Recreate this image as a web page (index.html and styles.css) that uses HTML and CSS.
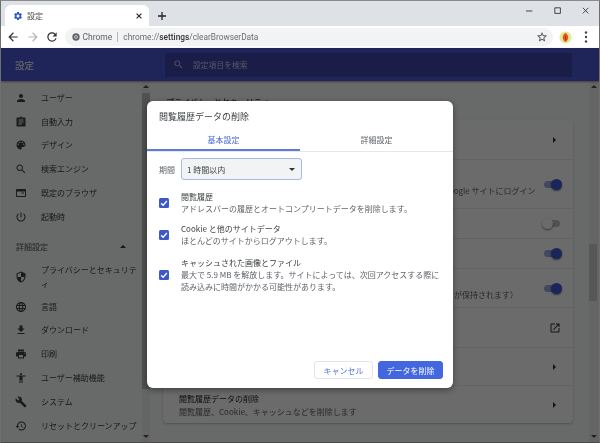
FILE: index.html
```html
<!DOCTYPE html>
<html lang="ja">
<head>
<meta charset="utf-8">
<title>設定</title>
<link rel="stylesheet" href="styles.css">
</head>
<body>
<div class="window">
  <div class="tabstrip">
    <div class="tab">
      <svg class="tab-gear" viewBox="0 0 24 24"><path d="M19.14 12.94c.04-.3.06-.61.06-.94 0-.32-.02-.64-.07-.94l2.03-1.58c.18-.14.23-.41.12-.61l-1.92-3.32c-.12-.22-.37-.29-.59-.22l-2.39.96c-.5-.38-1.03-.7-1.62-.94l-.36-2.54c-.04-.24-.24-.41-.48-.41h-3.84c-.24 0-.43.17-.47.41l-.36 2.54c-.59.24-1.13.57-1.62.94l-2.39-.96c-.22-.08-.47 0-.59.22L2.74 8.87c-.12.21-.08.47.12.61l2.03 1.58c-.05.3-.09.63-.09.94s.02.64.07.94l-2.03 1.58c-.18.14-.23.41-.12.61l1.92 3.32c.12.22.37.29.59.22l2.39-.96c.5.38 1.03.7 1.62.94l.36 2.54c.05.24.24.41.48.41h3.84c.24 0 .44-.17.47-.41l.36-2.54c.59-.24 1.13-.56 1.62-.94l2.39.96c.22.08.47 0 .59-.22l1.92-3.32c.12-.22.07-.47-.12-.61l-2.01-1.58zM12 15.6c-1.98 0-3.6-1.62-3.6-3.6s1.62-3.6 3.6-3.6 3.6 1.62 3.6 3.6-1.62 3.6-3.6 3.6z"/></svg>
      <span class="tab-title">設定</span>
      <svg class="tab-close" viewBox="0 0 10 10"><path d="M2 2l6 6M8 2l-6 6"/></svg>
    </div>
    <svg class="new-tab" viewBox="0 0 10 10"><path d="M5 1v8M1 5h8"/></svg>
    <div class="win-controls">
      <svg class="win-btn" viewBox="0 0 10 10"><path d="M0 5h8"/></svg>
      <svg class="win-btn" viewBox="0 0 10 10"><path d="M1 1h7v7H1z"/></svg>
      <svg class="win-btn" viewBox="0 0 10 10"><path d="M1 1l7 7M8 1L1 8"/></svg>
    </div>
  </div>
  <div class="toolbar">
    <svg class="tool-icon" viewBox="0 0 24 24"><path d="M20 11H7.83l5.59-5.59L12 4l-8 8 8 8 1.41-1.41L7.83 13H20v-2z"/></svg>
    <svg class="tool-icon tool-off" viewBox="0 0 24 24"><path d="M12 4l-1.41 1.41L16.17 11H4v2h12.17l-5.58 5.59L12 20l8-8z"/></svg>
    <svg class="tool-icon" viewBox="0 0 24 24"><path d="M17.65 6.35C16.2 4.9 14.21 4 12 4c-4.42 0-7.99 3.58-7.99 8s3.57 8 7.99 8c3.73 0 6.84-2.55 7.73-6h-2.08c-.82 2.33-3.04 4-5.65 4-3.31 0-6-2.69-6-6s2.69-6 6-6c1.66 0 3.14.69 4.22 1.78L13 11h7V4l-2.35 2.35z"/></svg>
    <div class="omnibox">
      <svg class="chrome-mark" viewBox="0 0 12 12"><circle cx="6" cy="6" r="5.5"/><circle class="chrome-ring" cx="6" cy="6" r="2.2"/></svg>
      <span class="omni-chip">Chrome</span>
      <span class="omni-sep"></span>
      <span class="omni-url">chrome://<b>settings</b>/clearBrowserData</span>
      <svg class="omni-star" viewBox="0 0 24 24"><path d="M22 9.24l-7.19-.62L12 2 9.19 8.63 2 9.24l5.46 4.73L5.82 21 12 17.27 18.18 21l-1.63-7.03L22 9.24zM12 15.4l-3.76 2.27 1-4.28-3.32-2.88 4.38-.38L12 6.1l1.71 4.04 4.38.38-3.32 2.88 1 4.28L12 15.4z"/></svg>
    </div>
    <svg class="avatar" viewBox="0 0 14 14"><circle cx="7" cy="7" r="6.5" fill="#e3ea8f"/><path d="M7 2.2c2 .8 3 3 3 4.8s-1 4-3 4.8C5 11 4 8.800 4 7s1-4 3-4.800z" fill="#e2582c"/><path d="M6.600 5h1v4.500h-1z" fill="#a52a1c"/></svg>
    <svg class="menu-dots" viewBox="0 0 4 14"><circle cx="2" cy="2.500" r="1.200"/><circle cx="2" cy="7" r="1.200"/><circle cx="2" cy="11.500" r="1.200"/></svg>
  </div>

  <div class="page">
    <header class="page-header">
      <div class="header-title">設定</div>
      <div class="search">
        <svg class="search-icon" viewBox="0 0 24 24"><path d="M15.500 14h-.79l-.28-.27C15.410 12.590 16 11.110 16 9.500 16 5.910 13.090 3 9.500 3S3 5.910 3 9.500 5.910 16 9.500 16c1.610 0 3.090-.59 4.230-1.570l.27.28v.79l5 4.990L20.490 19l-4.990-5zm-6 0C7.010 14 5 11.990 5 9.500S7.010 5 9.500 5 14 7.010 14 9.500 11.990 14 9.500 14z"/></svg>
        <span>設定項目を検索</span>
      </div>
    </header>
    <div class="page-body">
      <nav class="sidebar">
        <div class="nav-list">
          <div class="nav-item"><svg class="nav-icon" viewBox="0 0 24 24"><path d="M12 12c2.210 0 4-1.790 4-4s-1.790-4-4-4-4 1.790-4 4 1.790 4 4 4zm0 2c-2.670 0-8 1.340-8 4v2h16v-2c0-2.660-5.330-4-8-4z"/></svg><span>ユーザー</span></div>
          <div class="nav-item"><svg class="nav-icon" viewBox="0 0 24 24"><path d="M19 3h-4.180C14.400 1.840 13.300 1 12 1c-1.300 0-2.400.84-2.820 2H5c-1.100 0-2 .9-2 2v14c0 1.100.9 2 2 2h14c1.100 0 2-.9 2-2V5c0-1.100-.9-2-2-2zm-7 0c.55 0 1 .45 1 1s-.45 1-1 1-1-.45-1-1 .45-1 1-1zm2 14H7v-2h7v2zm3-4H7v-2h10v2zm0-4H7V7h10v2z"/></svg><span>自動入力</span></div>
          <div class="nav-item"><svg class="nav-icon" viewBox="0 0 24 24"><path d="M12 3c-4.970 0-9 4.030-9 9s4.030 9 9 9c.83 0 1.500-.67 1.500-1.500 0-.39-.15-.74-.39-1.010-.23-.26-.38-.61-.38-.99 0-.83.67-1.500 1.500-1.500H16c2.760 0 5-2.240 5-5 0-4.420-4.030-8-9-8zm-5.500 9c-.83 0-1.500-.67-1.500-1.500S5.670 9 6.500 9 8 9.670 8 10.500 7.330 12 6.500 12zm3-4C8.670 8 8 7.330 8 6.500S8.670 5 9.500 5s1.500.67 1.500 1.500S10.330 8 9.500 8zm5 0c-.83 0-1.500-.67-1.500-1.500S13.670 5 14.500 5s1.500.67 1.500 1.500S15.330 8 14.500 8zm3 4c-.83 0-1.500-.67-1.500-1.500S16.670 9 17.500 9s1.500.67 1.500 1.500-.67 1.500-1.500 1.500z"/></svg><span>デザイン</span></div>
          <div class="nav-item"><svg class="nav-icon" viewBox="0 0 24 24"><path d="M15.500 14h-.79l-.28-.27C15.410 12.590 16 11.110 16 9.500 16 5.910 13.090 3 9.500 3S3 5.910 3 9.500 5.910 16 9.500 16c1.610 0 3.090-.59 4.230-1.570l.27.28v.79l5 4.990L20.490 19l-4.990-5zm-6 0C7.010 14 5 11.990 5 9.500S7.010 5 9.500 5 14 7.010 14 9.500 11.990 14 9.500 14z"/></svg><span>検索エンジン</span></div>
          <div class="nav-item"><svg class="nav-icon" viewBox="0 0 24 24"><path d="M20 4H4c-1.100 0-2 .9-2 2v12c0 1.100.9 2 2 2h16c1.100 0 2-.9 2-2V6c0-1.100-.9-2-2-2zm0 14H4V9h16v9zm-7-7h5v2h-5z"/></svg><span>既定のブラウザ</span></div>
          <div class="nav-item"><svg class="nav-icon" viewBox="0 0 24 24"><path d="M13 3h-2v10h2V3zm4.830 2.170l-1.420 1.420C17.990 7.860 19 9.810 19 12c0 3.870-3.130 7-7 7s-7-3.130-7-7c0-2.190 1.010-4.140 2.580-5.420L6.170 5.170C4.230 6.820 3 9.260 3 12c0 4.970 4.030 9 9 9s9-4.030 9-9c0-2.740-1.230-5.180-3.170-6.830z"/></svg><span>起動時</span></div>
          <div class="nav-group"><span>詳細設定</span><i class="caret-up"></i></div>
          <div class="nav-item nav-tall"><svg class="nav-icon" viewBox="0 0 24 24"><path d="M12 1L3 5v6c0 5.550 3.840 10.740 9 12 5.160-1.260 9-6.450 9-12V5l-9-4zm0 10.990h7c-.53 4.120-3.280 7.790-7 8.940V12H5V6.300l7-3.110v8.800z"/></svg><span>プライバシーとセキュリティ</span></div>
          <div class="nav-item"><svg class="nav-icon" viewBox="0 0 24 24"><path d="M11.990 2C6.470 2 2 6.480 2 12s4.470 10 9.990 10C17.520 22 22 17.520 22 12S17.520 2 11.990 2zm6.930 6h-2.950c-.32-1.250-.78-2.450-1.380-3.560 1.840.63 3.370 1.910 4.330 3.560zM12 4.040c.83 1.200 1.480 2.530 1.910 3.960h-3.820c.43-1.430 1.080-2.760 1.910-3.960zM4.260 14C4.100 13.360 4 12.690 4 12s.1-1.360.26-2h3.380c-.08.66-.14 1.320-.14 2 0 .68.06 1.340.14 2H4.260zm.82 2h2.950c.32 1.250.78 2.450 1.380 3.560-1.840-.63-3.370-1.900-4.330-3.560zm2.950-8H5.080c.96-1.660 2.490-2.930 4.330-3.560C8.810 5.550 8.350 6.750 8.030 8zM12 19.960c-.83-1.200-1.480-2.530-1.910-3.960h3.820c-.43 1.430-1.080 2.760-1.910 3.960zM14.340 14H9.660c-.09-.66-.16-1.320-.16-2 0-.68.07-1.350.16-2h4.680c.09.65.16 1.320.16 2 0 .68-.07 1.340-.16 2zm.25 5.560c.6-1.110 1.060-2.310 1.380-3.560h2.950c-.96 1.650-2.490 2.930-4.330 3.560zM16.360 14c.08-.66.14-1.320.14-2 0-.68-.06-1.340-.14-2h3.380c.16.64.26 1.310.26 2s-.1 1.360-.26 2h-3.380z"/></svg><span>言語</span></div>
          <div class="nav-item"><svg class="nav-icon" viewBox="0 0 24 24"><path d="M19 9h-4V3H9v6H5l7 7 7-7zM5 18v2h14v-2H5z"/></svg><span>ダウンロード</span></div>
          <div class="nav-item"><svg class="nav-icon" viewBox="0 0 24 24"><path d="M19 8H5c-1.660 0-3 1.340-3 3v6h4v4h12v-4h4v-6c0-1.660-1.340-3-3-3zm-3 11H8v-5h8v5zm3-7c-.55 0-1-.45-1-1s.45-1 1-1 1 .45 1 1-.45 1-1 1zm-1-9H6v4h12V3z"/></svg><span>印刷</span></div>
          <div class="nav-item"><svg class="nav-icon" viewBox="0 0 24 24"><path d="M12 2c1.100 0 2 .9 2 2s-.9 2-2 2-2-.9-2-2 .9-2 2-2zm9 7h-6v13h-2v-6h-2v6H9V9H3V7h18v2z"/></svg><span>ユーザー補助機能</span></div>
          <div class="nav-item"><svg class="nav-icon" viewBox="0 0 24 24"><path d="M22.700 19l-9.100-9.100c.9-2.300.4-5-1.500-6.900-2-2-5-2.400-7.400-1.300L9 6 6 9 1.600 4.700C.4 7.100.9 10.100 2.900 12.100c1.900 1.900 4.600 2.400 6.900 1.500l9.100 9.100c.4.4 1 .4 1.400 0l2.300-2.300c.5-.4.5-1.100.1-1.400z"/></svg><span>システム</span></div>
          <div class="nav-item"><svg class="nav-icon" viewBox="0 0 24 24"><path d="M13 3c-4.970 0-9 4.030-9 9H1l3.890 3.890.07.14L9 12H6c0-3.870 3.130-7 7-7s7 3.130 7 7-3.130 7-7 7c-1.930 0-3.680-.79-4.940-2.060l-1.420 1.420C8.270 19.990 10.510 21 13 21c4.970 0 9-4.030 9-9s-4.030-9-9-9zm-1 5v5l4.280 2.540.72-1.210-3.500-2.080V8H12z"/></svg><span>リセットとクリーンアップ</span></div>
        </div>
        <div class="scrollbar">
          <i class="sb-up"></i>
          <div class="sb-track sb-track-nav"><div class="sb-thumb sb-thumb-nav"></div></div>
          <i class="sb-down"></i>
        </div>
      </nav>
      <main class="main">
        <div class="main-col">
          <h2 class="section-title">プライバシーとセキュリティ</h2>
          <section class="card">
            <div class="row row-1"><span class="row-text"><b>同期と Google サービス</b></span><i class="arrow"></i></div>
            <div class="row row-2"><span class="row-text"><b>Chrome へのログインを許可</b><small>このスイッチをオフにすると、Chrome にログインしなくてもブラウザで Google サイトにログイン</small></span><i class="toggle on"></i></div>
            <div class="row row-3"><span class="row-text"><b>閲覧トラフィックと一緒に「トラッキング拒否」</b></span><i class="toggle"></i></div>
            <div class="row row-3"><span class="row-text"><b>お支払い方法の保存の確認を許可</b></span><i class="toggle on"></i></div>
            <div class="row row-5"><span class="row-text"><b>ページをプリロードして閲覧と検索をすばやく</b><small>閲覧履歴を使用してページを事前に読み込みます（一部の Google の Cookie が保持されます）</small></span><i class="toggle on"></i></div>
            <div class="row row-6"><span class="row-text"><b>証明書の管理</b></span><svg class="ext" viewBox="0 0 24 24"><path d="M19 19H5V5h7V3H5c-1.110 0-2 .9-2 2v14c0 1.100.89 2 2 2h14c1.100 0 2-.9 2-2v-7h-2v7zM14 3v2h3.590l-9.830 9.830 1.410 1.410L19 6.410V10h2V3h-7z"/></svg></div>
            <div class="row row-7"><span class="row-text"><b>サイトの設定</b><small>ウェブサイトで使用できる情報や、表示できるコンテンツを管理します</small></span><i class="arrow"></i></div>
            <div class="row row-7"><span class="row-text"><b>閲覧履歴データの削除</b><small>閲覧履歴、Cookie、キャッシュなどを削除します</small></span><i class="arrow"></i></div>
          </section>
        </div>
        <div class="scrollbar scrollbar-main">
          <i class="sb-up"></i>
          <div class="sb-track"><div class="sb-thumb"></div></div>
          <i class="sb-down"></i>
        </div>
      </main>
    </div>
    <div class="scrim"></div>
    <div class="dialog">
      <div class="dlg-title">閲覧履歴データの削除</div>
      <div class="dlg-tabs">
        <div class="dlg-tab active">基本設定</div>
        <div class="dlg-tab">詳細設定</div>
      </div>
      <div class="dlg-body">
        <div class="period">
          <span class="period-label">期間</span>
          <div class="select"><span>1 時間以内</span><i class="select-caret"></i></div>
        </div>
        <div class="check-row check-1">
          <span class="checkbox"><svg viewBox="0 0 12 12"><path d="M2.500 6.200l2.400 2.400 4.600-5"/></svg></span>
          <div class="check-text"><div class="check-head">閲覧履歴</div><div class="check-desc">アドレスバーの履歴とオートコンプリートデータを削除します。</div></div>
        </div>
        <div class="check-row check-2">
          <span class="checkbox"><svg viewBox="0 0 12 12"><path d="M2.500 6.200l2.400 2.400 4.600-5"/></svg></span>
          <div class="check-text"><div class="check-head">Cookie と他のサイトデータ</div><div class="check-desc">ほとんどのサイトからログアウトします。</div></div>
        </div>
        <div class="check-row check-3">
          <span class="checkbox"><svg viewBox="0 0 12 12"><path d="M2.500 6.200l2.400 2.400 4.600-5"/></svg></span>
          <div class="check-text"><div class="check-head">キャッシュされた画像とファイル</div><div class="check-desc">最大で 5.9 MB を解放します。サイトによっては、次回アクセスする際に読み込みに時間がかかる可能性があります。</div></div>
        </div>
      </div>
      <div class="dlg-actions">
        <button class="btn btn-cancel">キャンセル</button>
        <button class="btn btn-primary">データを削除</button>
      </div>
    </div>
  </div>
</div>
</body>
</html>
```
FILE: styles.css
```css
* { box-sizing: border-box; }
html, body { margin: 0; padding: 0; }
body { width: 600px; height: 443px; overflow: hidden; font-family: "Noto Sans CJK JP", "Roboto", sans-serif; font-size: 8px; }
.window { width: 600px; height: 443px; display: flex; flex-direction: column; background: #fff; border-top: 1px solid #8b8b8e; border-bottom: 1px solid #4a4a4a; border-left: 1px solid #6e6e6e; border-right: 1px solid #6e6e6e; overflow: hidden; filter: blur(.3px); }

.tabstrip { height: 25px; background: #dee1e6; display: flex; align-items: flex-start; padding: 4px 0 0 4px; flex: none; }
.tab { width: 144px; height: 21px; background: #fff; border-radius: 6px 6px 0 0; display: flex; align-items: center; padding: 0 6px 0 8px; }
.tab-gear { width: 10px; height: 10px; fill: #2b55c9; flex: none; }
.tab-title { margin-left: 4px; font-size: 8px; color: #4a4a4a; flex: 1; }
.tab-close { width: 8px; height: 8px; stroke: #333; stroke-width: 1.600; fill: none; }
.new-tab { width: 10px; height: 10px; margin: 6px 0 0 8px; stroke: #222; stroke-width: 1.300; fill: none; }
.win-controls { margin-left: auto; display: flex; gap: 20px; padding: 2px 9px 0 0; }
.win-btn { width: 8px; height: 8px; stroke: #333; stroke-width: 1.100; fill: none; }

.toolbar { height: 22px; background: #fff; display: flex; align-items: center; padding-left: 5px; flex: none; }
.tool-icon { width: 14px; height: 14px; margin-right: 5.500px; fill: #333; flex: none; }
.tool-off { fill: #b4b6b8; }
.omnibox { width: 488px; height: 18px; border-radius: 9px; background: #f1f3f4; display: flex; align-items: center; padding: 0 5px 0 7px; font-family: "Roboto", sans-serif; font-size: 8.300px; color: #6a6c6f; }
.chrome-mark { width: 8px; height: 8px; fill: #5f6368; flex: none; }
.chrome-ring { fill: #5f6368; stroke: #f1f3f4; stroke-width: 1; }
.omni-chip { margin-left: 3px; color: #5f6368; font-size: 8.500px; }
.omni-sep { width: 1px; height: 10px; background: #b4b6b8; margin: 0 5px 0 5px; }
.omni-url b { font-weight: 500; color: #333; }
.omni-star { margin-left: auto; width: 12px; height: 12px; fill: #444; }
.avatar { width: 13px; height: 13px; margin-left: 6px; flex: none; }
.menu-dots { width: 4px; height: 14px; margin-left: 12px; fill: #444; flex: none; }

.page { position: relative; flex: 1; min-height: 0; display: flex; flex-direction: column; background: #f8f9fa; }
.page-header { height: 33px; flex: none; background: #4a58d2; display: flex; align-items: center; box-shadow: 0 1px 2px rgba(0,0,0,.4); position: relative; z-index: 1; }
.header-title { width: 164px; padding-left: 14px; font-size: 9.500px; color: #fff; }
.search { width: 407px; height: 24px; background: #3c46ab; display: flex; align-items: center; padding-left: 8px; color: #c8ccee; font-size: 7.800px; }
.search-icon { width: 11px; height: 11px; margin-right: 9px; fill: #c8ccee; }

.page-body { flex: 1; min-height: 0; display: flex; }
.sidebar { width: 149px; flex: none; display: flex; }
.nav-list { flex: 1; min-width: 0; padding-top: 5px; }
.nav-item { height: 23.800px; display: flex; align-items: center; font-size: 8px; color: #3c4043; line-height: 14px; }
.nav-tall { height: 36px; }
.nav-tall span { width: 96px; }
.nav-item span { display: block; }
.nav-icon { width: 12px; height: 12px; margin: 0 14px 0 14px; fill: #3c4043; flex: none; }
.nav-group { height: 24px; margin-top: 6px; display: flex; align-items: center; justify-content: space-between; padding: 0 16px 0 15px; font-size: 8px; color: #555; }
.caret-up { width: 0; height: 0; border: 3px solid transparent; border-top: 0; border-bottom: 3px solid #333; }

.scrollbar { width: 8px; flex: none; display: flex; flex-direction: column; align-items: center; background: #f1f1f1; }
.scrollbar-main { width: 10px; }
.sb-up, .sb-down { flex: none; width: 0; height: 0; border: 3px solid transparent; margin: 4px 0; }
.sb-up { border-top: 0; border-bottom: 3px solid #505050; }
.sb-down { border-bottom: 0; border-top: 3px solid #505050; }
.sb-track { flex: 1; width: 100%; padding-top: 152px; }
.sb-track-nav { padding-top: 0; }
.sb-thumb { height: 57px; width: 8px; background: #cfcfcf; }
.sb-thumb-nav { height: 296px; background: #c0c0c0; margin-top: 1px; }

.main { flex: 1; min-width: 0; display: flex; }
.main-col { flex: 1; min-width: 0; padding: 13px 0 0 13px; }
.section-title { margin: 0 0 10px 3px; height: 16px; line-height: 16px; font-size: 8px; font-weight: 500; color: #3c4043; }
.card { width: 410px; background: #fff; border-radius: 4px; box-shadow: 0 1px 2px rgba(60,64,67,.3); }
.row { display: flex; align-items: center; justify-content: space-between; padding: 0 13px 0 16px; border-top: 1px solid #eaebec; height: 39px; }
.row:first-child { border-top: 0; }
.row-2 { height: 49px; }
.row-3 { height: 30px; }
.row-5 { height: 39px; }
.row-6 { height: 40px; }
.row-7 { height: 38px; }
.row-text { display: block; min-width: 0; white-space: nowrap; font-size: 8px; line-height: 13px; color: #5f6368; }
.row-text b { display: block; font-weight: 400; color: #202124; }
.row-text small { display: block; font-size: 8px; }
.arrow { flex: none; width: 0; height: 0; border: 3px solid transparent; border-right: 0; border-left: 3px solid #333; margin-right: 4px; }
.ext { flex: none; width: 12px; height: 12px; fill: #333; margin-right: -1px; }
.toggle { flex: none; position: relative; width: 16px; height: 7px; border-radius: 4px; background: #bdc1c6; }
.toggle::after { content: ""; position: absolute; left: -2px; top: -2px; width: 11px; height: 11px; border-radius: 50%; background: #fff; box-shadow: 0 1px 2px rgba(0,0,0,.5); }
.toggle.on { background: #a0abe6; }
.toggle.on::after { left: auto; right: -2px; background: #3f5bd6; }

.scrim { position: absolute; inset: 0; background: rgba(0,0,0,.58); z-index: 2; }
.dialog { position: absolute; z-index: 3; left: 146px; top: 53px; width: 306px; height: 287px; background: #fff; border-radius: 6px; box-shadow: 0 2px 6px rgba(0,0,0,.4); display: flex; flex-direction: column; }
.dlg-title { padding: 10px 12px 0; height: 27px; line-height: 12px; font-size: 9px; color: #3c4043; }
.dlg-tabs { display: flex; height: 24px; border-bottom: 1px solid #e6e7e9; flex: none; }
.dlg-tab { width: 153px; display: flex; align-items: center; justify-content: center; font-size: 8px; color: #5f6368; }
.dlg-tab.active { color: #4a68d8; box-shadow: inset 0 -2px 0 #5f7bd9; }
.dlg-body { flex: 1; padding: 6px 0 0 12px; }
.period { display: flex; align-items: center; }
.period-label { width: 22px; font-size: 8px; color: #5f6368; }
.select { width: 121px; height: 22px; background: #f1f3f4; border: 1px solid #a9b7ea; border-radius: 3px; display: flex; align-items: center; justify-content: space-between; padding: 0 6px 0 5px; font-size: 8px; color: #3c4043; }
.select-caret { width: 0; height: 0; border: 3px solid transparent; border-bottom: 0; border-top: 3px solid #333; }
.check-row { display: flex; align-items: center; }
.check-1 { margin-top: 11px; }
.check-2 { margin-top: 8px; }
.check-3 { margin-top: 10px; }
.checkbox { width: 10px; height: 10px; flex: none; background: #3d58c9; border-radius: 1.500px; display: flex; }
.checkbox svg { width: 10px; height: 10px; stroke: #fff; stroke-width: 1.600; fill: none; }
.check-text { margin-left: 12px; width: 262px; }
.check-head { font-size: 8px; line-height: 12px; color: #3c4043; }
.check-desc { font-size: 8px; line-height: 12px; color: #5f6368; }
.dlg-actions { display: flex; justify-content: flex-end; gap: 5px; padding: 0 10px 9px 0; }
.btn { height: 18px; border-radius: 3px; font-family: inherit; font-size: 8px; padding: 0; margin: 0; }
.btn-cancel { width: 59px; background: #fff; border: 1px solid #e3e5ea; color: #5572d8; }
.btn-primary { width: 65px; background: #4367df; border: 1px solid #4367df; color: #fff; }
```
